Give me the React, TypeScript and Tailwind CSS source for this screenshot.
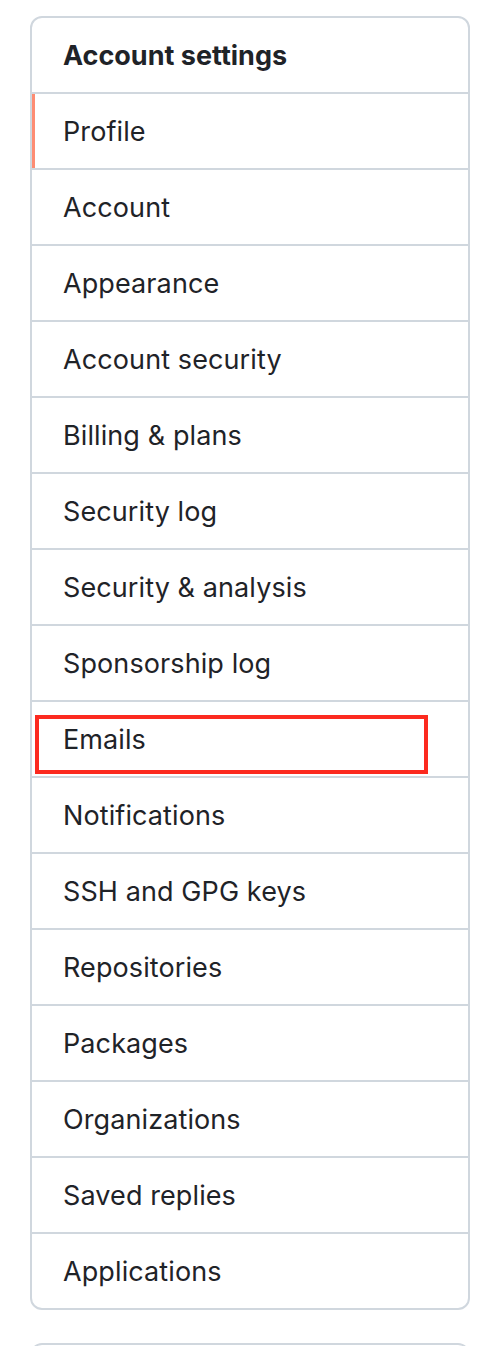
import React from "react";

const items = [
  "Profile",
  "Account",
  "Appearance",
  "Account security",
  "Billing & plans",
  "Security log",
  "Security & analysis",
  "Sponsorship log",
  "Emails",
  "Notifications",
  "SSH and GPG keys",
  "Repositories",
  "Packages",
  "Organizations",
  "Saved replies",
  "Applications",
];

export default function App() {
  return (
    <div
      className="min-h-[1346px] w-[498px] bg-white pt-4 pl-[30px] text-[#1f2328]"
      style={{ fontFamily: "Inter, 'Noto Sans', 'Liberation Sans', sans-serif" }}
    >
      <nav className="w-[440px] overflow-hidden rounded-[12px] border-2 border-[#d0d7de]">
        <div className="flex h-[74px] items-center px-[31px] pt-[2px] text-[27px] font-bold">
          Account settings
        </div>
        {items.map((label, i) => (
          <div
            key={label}
            className="relative flex h-[76px] items-center border-t-2 border-[#d0d7de] px-[31px] pt-[2px] text-[27px] tracking-[0.1px]"
          >
            {i === 0 && (
              <span className="absolute -left-px top-0 h-[74px] w-[4px] bg-[#fd8c73]" />
            )}
            {label === "Emails" && (
              <span className="absolute left-[3px] top-[13px] h-[59px] w-[393px] border-[4px] border-[#fc2a1f]" />
            )}
            <span className="relative">{label}</span>
          </div>
        ))}
      </nav>
      <div className="mt-[33px] h-[40px] w-[440px] rounded-t-[12px] border-2 border-b-0 border-[#d0d7de]" />
    </div>
  );
}
